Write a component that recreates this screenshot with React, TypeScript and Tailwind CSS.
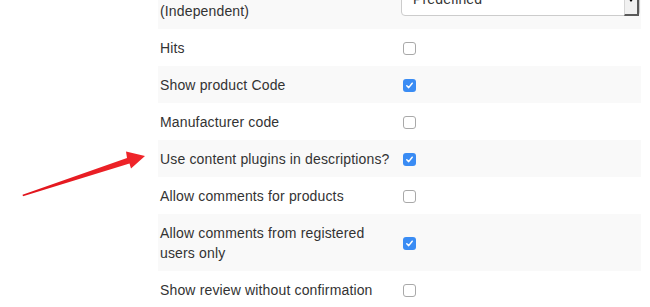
import React from "react";

type Row = { label: string[]; kind: "select" | "check"; checked?: boolean };

const rows: Row[] = [
  { label: ["Product list sorting", "(Independent)"], kind: "select" },
  { label: ["Hits"], kind: "check", checked: false },
  { label: ["Show product Code"], kind: "check", checked: true },
  { label: ["Manufacturer code"], kind: "check", checked: false },
  { label: ["Use content plugins in descriptions?"], kind: "check", checked: true },
  { label: ["Allow comments for products"], kind: "check", checked: false },
  { label: ["Allow comments from registered", "users only"], kind: "check", checked: true },
  { label: ["Show review without confirmation"], kind: "check", checked: false },
];

function Check({ checked }: { checked?: boolean }) {
  if (checked) {
    return (
      <span className="flex h-[13px] w-[13px] items-center justify-center rounded-[3px] bg-[#3a8cf4]">
        <svg width="9" height="9" viewBox="0 0 9 9">
          <path d="M1.8 4.8 L3.7 6.6 L7.2 2.2" fill="none" stroke="#fff" strokeWidth="1.5" strokeLinecap="round" strokeLinejoin="round" />
        </svg>
      </span>
    );
  }
  return <span className="block h-[13px] w-[13px] rounded-[3px] border border-[#a9a9a9] bg-white" />;
}

function Select() {
  return (
    <div className="relative mt-[14px] flex h-[30px] w-[239px] items-end rounded-[4px] border border-[#cccccc] bg-white pb-[6px] pl-[11px] text-[14px] leading-5 tracking-[0.15px] text-[#333]">
      <span>Predefined</span>
      <div className="absolute right-0 top-0 flex h-[29px] w-[15px] items-end justify-center border-b-2 border-l border-r-2 border-b-[#5a5a5a] border-l-[#d6d6d6] border-r-[#5a5a5a] bg-[#f1f1f1] pb-[12px]">
        <span className="block h-0 w-0 border-l-[3px] border-r-[3px] border-t-[4px] border-l-transparent border-r-transparent border-t-black" />
      </div>
    </div>
  );
}

export default function App() {
  return (
    <div
      className="relative h-[307px] w-[650px] overflow-hidden bg-white text-[#333]"
      style={{ fontFamily: '"Liberation Sans", Arial, sans-serif' }}
    >
      <div className="-mt-[28px] ml-[158px] w-[483px]">
        {rows.map((r, i) => (
          <div
            key={i}
            className={`grid grid-cols-[243px_1fr] ${i % 2 === 0 ? "bg-[#f9f9f9]" : "bg-white"}`}
          >
            <div className="pb-2 pl-[2px] pt-[9px] text-[14px] leading-5 tracking-[0.15px]">
              {r.label.map((l, j) => (
                <div key={j}>{l}</div>
              ))}
            </div>
            <div className={`flex ${r.kind === "check" ? "items-center pl-[2px] pt-[1px]" : "items-start"}`}>
              {r.kind === "select" ? <Select /> : <Check checked={r.checked} />}
            </div>
          </div>
        ))}
      </div>
      <svg className="absolute left-0 top-0" width="160" height="210" viewBox="0 0 160 210">
        <defs>
          <linearGradient id="ag" x1="0" y1="0" x2="1" y2="0">
            <stop offset="0" stopColor="#e0141c" />
            <stop offset="1" stopColor="#f0262b" />
          </linearGradient>
        </defs>
        <path
          d="M22.5 194.8 L127 158 L126 151.5 L145 156 L131 168.5 L129.5 163.5 L23 196.3 Z"
          fill="url(#ag)"
        />
      </svg>
    </div>
  );
}
